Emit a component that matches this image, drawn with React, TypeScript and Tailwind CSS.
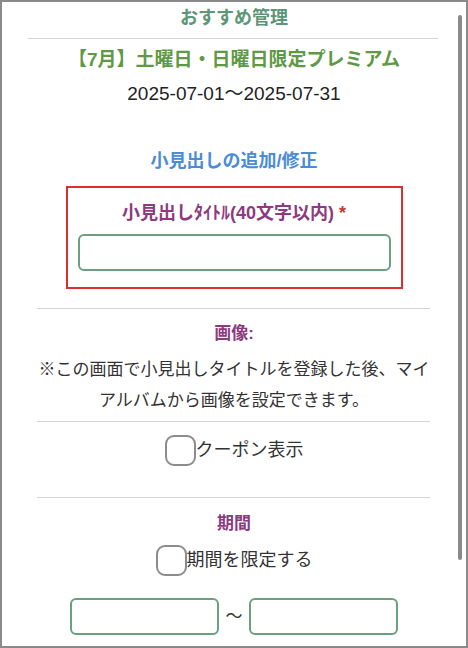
import React from "react";

const font = {
  fontFamily: '"Liberation Sans", "Noto Sans CJK JP", sans-serif',
};

function Divider({ className = "" }: { className?: string }) {
  return <div className={`h-px bg-[#d4d4d4] ${className}`}></div>;
}

function CheckRow({ label, className = "" }: { label: string; className?: string }) {
  return (
    <label className={`flex items-center justify-center ${className}`}>
      <span className="block h-[31px] w-[31px] rounded-[9px] border-2 border-[#8c8c8c] bg-white"></span>
      <span className="text-[18px] leading-[31px] text-[#333]">{label}</span>
    </label>
  );
}

export default function App() {
  return (
    <div
      className="relative h-[648px] w-[468px] overflow-hidden border-2 border-[#8a8a8a] bg-white"
      style={font}
    >
      {/* scrollbar */}
      <div className="absolute right-[4px] top-[13px] h-[545px] w-[4px] rounded-full bg-[#8a8a8a]"></div>

      <div className="flex flex-col text-center">
        <h1 className="pt-px text-[18px] font-semibold leading-[30px] text-[#5b9676]">
          おすすめ管理
        </h1>
        <Divider className="ml-[26px] mr-[28px] mt-[5px]" />

        <h2 className="mt-[7px] text-[19px] font-bold leading-[28px] text-[#5f9946]">
          【7月】土曜日・日曜日限定プレミアム
        </h2>
        <p className="mt-[6px] text-[19px] leading-[28px] text-[#222]">
          2025-07-01～2025-07-31
        </p>

        <h3 className="mt-[39px] text-[18px] font-bold leading-[28px] text-[#4a8cd6]">
          小見出しの追加/修正
        </h3>

        <div className="mx-auto mt-[11px] w-[337px] border-2 border-[#d8312f] pb-[16px] pt-[11px]">
          <div className="text-[18px] font-bold leading-[28px] text-[#8d3a80]">
            小見出しﾀｲﾄﾙ(40文字以内) <span className="text-[#c8392f]">*</span>
          </div>
          <input
            type="text"
            className="mx-auto mt-[7px] block h-[37px] w-[313px] rounded-[6px] border-2 border-[#6b9f7d] bg-white outline-none"
          />
        </div>

        <Divider className="ml-[35px] mr-[36px] mt-[19px]" />

        <h4 className="mt-[11px] text-[17px] font-bold leading-[28px] text-[#8d3a80]">
          画像:
        </h4>
        <p className="mt-[6px] px-[30px] text-[17px] leading-[31px] text-[#333]">
          ※この画面で小見出しタイトルを登録した後、マイアルバムから画像を設定できます。
        </p>

        <Divider className="ml-[35px] mr-[36px] mt-[5px]" />

        <CheckRow label="クーポン表示" className="mt-[13px]" />

        <Divider className="ml-[35px] mr-[36px] mt-[31px]" />

        <h4 className="mt-[12px] text-[17px] font-bold leading-[28px] text-[#8d3a80]">
          期間
        </h4>
        <CheckRow label="期間を限定する" className="mt-[7px]" />

        <div className="mt-[22px] flex items-center justify-center gap-[4px]">
          <input
            type="text"
            className="block h-[37px] w-[149px] rounded-[6px] border-2 border-[#6b9f7d] bg-white outline-none"
          />
          <span className="w-[22px] text-[17px] text-[#333]">～</span>
          <input
            type="text"
            className="block h-[37px] w-[149px] rounded-[6px] border-2 border-[#6b9f7d] bg-white outline-none"
          />
        </div>
      </div>
    </div>
  );
}
